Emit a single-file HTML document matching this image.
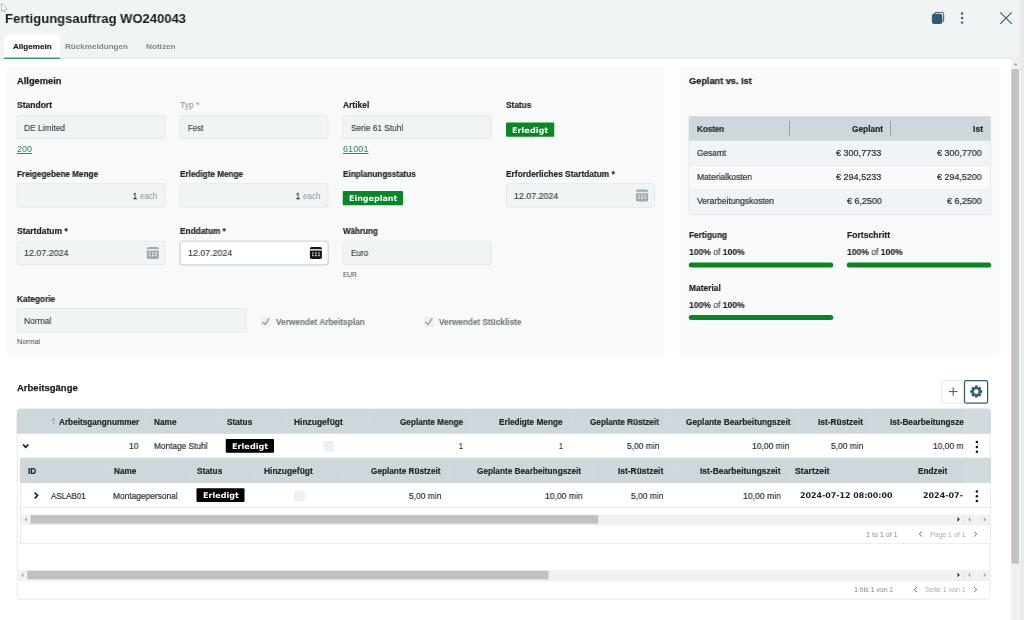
<!DOCTYPE html>
<html lang="de">
<head>
<meta charset="utf-8">
<title>Fertigungsauftrag WO240043</title>
<style>
html,body{margin:0;padding:0}
body{width:1024px;height:620px;position:relative;overflow:hidden;background:#fff;
 font-family:"Liberation Sans",sans-serif;font-size:9px;color:#2b2f33}
.a{position:absolute}
#shapes{position:absolute;left:0;top:0}
.t{position:absolute;white-space:nowrap;line-height:12px;height:12px;transform-origin:0 50%;will-change:transform}
.title{font-size:13.4px;font-weight:bold;color:#1a1d20}
.tab{font-weight:bold;font-size:8.1px;color:#1c1f22;-webkit-text-stroke:.2px #1c1f22}
.tabi{font-weight:bold;font-size:8.1px;color:#7f858a}
.sect{font-weight:bold;font-size:9.3px;color:#1c1f22;-webkit-text-stroke:.25px #1c1f22}
.lbl{font-weight:bold;font-size:8.4px;color:#24282c;-webkit-text-stroke:.2px #24282c}
.lbld{font-size:9px;color:#868d92}
.val{font-size:9px;color:#3a4045;-webkit-text-stroke:.15px #3a4045}
.vald{font-size:9px;color:#1f2326;-webkit-text-stroke:.3px #1f2326}
.unit{font-size:9px;color:#8b9398}
.sm{font-size:7.6px;color:#454b50}
.lnk{font-size:9px;color:#2d8a5e;text-decoration:underline;text-underline-offset:1px}
.bdg{font-family:"DejaVu Sans","Liberation Sans",sans-serif;color:#fff;font-weight:bold;font-size:7.8px}
.chk{font-weight:bold;font-size:8.4px;color:#7c8489;-webkit-text-stroke:.2px #7c8489}
.th{font-weight:bold;font-size:8.2px;color:#24282c;-webkit-text-stroke:.2px #24282c}
.td{font-size:9px;color:#2a2e32;-webkit-text-stroke:.2px #2a2e32}
.dt{font-family:"DejaVu Sans","Liberation Sans",sans-serif;font-weight:bold;font-size:7.9px;color:#1c1f22}
.pg{font-size:7.6px;color:#7e868b}
.pgl{font-size:7.6px;color:#a3aaae}
</style>
</head>
<body>
<svg id="shapes" width="1024" height="620" viewBox="0 0 1024 620">
<rect x="0" y="0" width="1020" height="58" fill="#f1f4f5"/>
<rect x="0" y="57.3" width="1020" height="1.7" fill="#e8ecee"/>
<rect x="1020" y="0" width="4" height="620" fill="#e9ecee"/>
<path d="M4.1 59V38.6Q4.1 34.8 7.9 34.8H56.4Q60.2 34.8 60.2 38.6V59Z" fill="#fff"/>
<rect x="4.1" y="57.4" width="56.1" height="1.7" rx="0.6" fill="#3a9b6d"/>
<g transform="translate(931.9 11.9)"><rect x="2.3" y=".5" width="9.5" height="9.5" rx="1.9" fill="none" stroke="#335b70" stroke-width="1"/><rect x="0" y="1.9" width="10.4" height="10.3" rx="2.1" fill="#335b70"/></g>
<circle cx="962.1" cy="13.5" r="1.2" fill="#335b70"/><circle cx="962.1" cy="18.05" r="1.2" fill="#335b70"/><circle cx="962.1" cy="22.6" r="1.2" fill="#335b70"/>
<path d="M1000.3 12.3L1011.7 23.9M1011.7 12.3L1000.3 23.9" fill="none" stroke="#335b70" stroke-width="1.15"/>
<path d="M1.4 3.3V11.5L3.3 9.9L4.4 12.2L5.6 11.6L4.6 9.5L7.3 9.3Z" fill="#fff" stroke="#a0a5a9" stroke-width="0.7"/>
<rect x="1011" y="59" width="9" height="561" fill="#f1f1f1"/>
<rect x="1011.4" y="69.2" width="7.5" height="494.4" fill="#c1c1c1"/>
<path d="M1013.4 65.3L1015.6 62.9L1017.8 65.3Z" fill="#a3a3a3"/>
<rect x="7" y="65.9" width="657.7" height="289.6" rx="3.5" fill="#f8fafa"/>
<rect x="17.0" y="115.25" width="148" height="23.5" rx="2.5" fill="#f1f4f5" stroke="#e4e9ec" stroke-width="1"/>
<rect x="180.0" y="115.25" width="148" height="23.5" rx="2.5" fill="#f1f4f5" stroke="#e4e9ec" stroke-width="1"/>
<rect x="343.0" y="115.25" width="148" height="23.5" rx="2.5" fill="#f1f4f5" stroke="#e4e9ec" stroke-width="1"/>
<rect x="506" y="122.5" width="48.25" height="14.2" rx="1" fill="#088726"/>
<rect x="17.0" y="183.75" width="148" height="23.5" rx="2.5" fill="#f1f4f5" stroke="#e4e9ec" stroke-width="1"/>
<rect x="180.0" y="183.75" width="148" height="23.5" rx="2.5" fill="#f1f4f5" stroke="#e4e9ec" stroke-width="1"/>
<rect x="506.5" y="183.75" width="148" height="23.5" rx="2.5" fill="#f1f4f5" stroke="#e4e9ec" stroke-width="1"/>
<rect x="342.75" y="191" width="60.25" height="14.2" rx="1" fill="#088726"/>
<rect x="17.0" y="241.25" width="148" height="23.5" rx="2.5" fill="#f1f4f5" stroke="#e4e9ec" stroke-width="1"/>
<rect x="180.0" y="241.1" width="148.2" height="23.900000000000002" rx="2.8" fill="#fff" stroke="#cfd9de" stroke-width="1.4"/>
<rect x="343.0" y="241.25" width="148" height="23.5" rx="2.5" fill="#f1f4f5" stroke="#e4e9ec" stroke-width="1"/>
<rect x="17.0" y="308.5" width="229.25" height="23.5" rx="2.5" fill="#f1f4f5" stroke="#e4e9ec" stroke-width="1"/>
<rect x="261.4" y="317.15" width="9.2" height="9.2" rx="1.3" fill="#edf1f3" stroke="#e6ebee" stroke-width="0.8"/>
<g transform="translate(261 316.75)"><path d="M1.3 5.3L4.2 7.6L8 1.9" fill="none" stroke="#9da2a6" stroke-width="1.45"/></g>
<rect x="424.4" y="317.15" width="9.2" height="9.2" rx="1.3" fill="#edf1f3" stroke="#e6ebee" stroke-width="0.8"/>
<g transform="translate(424 316.75)"><path d="M1.3 5.3L4.2 7.6L8 1.9" fill="none" stroke="#9da2a6" stroke-width="1.45"/></g>
<g transform="translate(636.1 189.6)"><rect x="0" y="0" width="12" height="12" rx="1.7" fill="#a2a8ac"/><rect x="0" y="2.1" width="12" height="1.7" fill="#e4e7e9"/><g fill="#fff" opacity=".5"><rect x="2.1" y="5.1" width="1.5" height="2.2"/><rect x="5.2" y="5.1" width="1.6" height="2.2"/><rect x="8.3" y="5.1" width="1.6" height="2.2"/></g><g fill="#fff" opacity=".85"><rect x="2.1" y="7.8" width="1.5" height="1.5"/><rect x="5.2" y="7.8" width="1.6" height="1.5"/><rect x="8.3" y="7.8" width="1.6" height="1.5"/></g></g>
<g transform="translate(146.8 246.9)"><rect x="0" y="0" width="12" height="12" rx="1.7" fill="#a2a8ac"/><rect x="0" y="2.1" width="12" height="1.7" fill="#e4e7e9"/><g fill="#fff" opacity=".5"><rect x="2.1" y="5.1" width="1.5" height="2.2"/><rect x="5.2" y="5.1" width="1.6" height="2.2"/><rect x="8.3" y="5.1" width="1.6" height="2.2"/></g><g fill="#fff" opacity=".85"><rect x="2.1" y="7.8" width="1.5" height="1.5"/><rect x="5.2" y="7.8" width="1.6" height="1.5"/><rect x="8.3" y="7.8" width="1.6" height="1.5"/></g></g>
<g transform="translate(309.9 246.9)"><rect x="0" y="0" width="12" height="12" rx="1.7" fill="#141719"/><rect x="0" y="2.1" width="12" height="1.7" fill="#c9c9c9"/><g fill="#fff" opacity=".5"><rect x="2.1" y="5.1" width="1.5" height="2.2"/><rect x="5.2" y="5.1" width="1.6" height="2.2"/><rect x="8.3" y="5.1" width="1.6" height="2.2"/></g><g fill="#fff" opacity=".85"><rect x="2.1" y="7.8" width="1.5" height="1.5"/><rect x="5.2" y="7.8" width="1.6" height="1.5"/><rect x="8.3" y="7.8" width="1.6" height="1.5"/></g></g>
<rect x="679.2" y="65.9" width="321.3" height="289.6" rx="3.5" fill="#f8fafa"/>
<rect x="688.75" y="116.25" width="302" height="98.75" rx="1" fill="#dfe5e8"/>
<path d="M688.75 140.75V118Q688.75 116.25 690.5 116.25H989Q990.7 116.25 990.7 118V140.75Z" fill="#ced7dc"/>
<rect x="689.45" y="140.75" width="300.5" height="24.3" fill="#f1f4f6"/>
<rect x="689.45" y="165.4" width="300.5" height="24.3" fill="#f9fbfb"/>
<rect x="689.45" y="189.8" width="300.6" height="24.5" fill="#f1f4f6"/>
<rect x="689.45" y="165" width="300.6" height="0.7" fill="#eaeef0"/>
<rect x="689.45" y="189.6" width="300.6" height="0.7" fill="#e8ecee"/>
<rect x="789" y="121.25" width="1" height="14.5" fill="#97a3a9"/>
<rect x="890" y="121.25" width="1" height="14.5" fill="#97a3a9"/>
<rect x="688.75" y="262.5" width="144.5" height="5" rx="2.5" fill="#0a8521"/>
<rect x="846.75" y="262.5" width="144.5" height="5" rx="2.5" fill="#0a8521"/>
<rect x="688.75" y="315" width="144.5" height="5" rx="2.5" fill="#0a8521"/>
<rect x="941.9" y="380.5" width="22.6" height="22.6" rx="1.8" fill="#fff" stroke="#e2e9ed" stroke-width="1"/>
<rect x="964.5" y="380.5" width="23.1" height="22.7" rx="1.8" fill="#fff" stroke="#335b70" stroke-width="1.25"/>
<path d="M953.2 387.3V395.9M948.9 391.6H957.5" fill="none" stroke="#335b70" stroke-width="1"/>
<path d="M975.06 387.27L975.13 385.87L977.47 385.87L977.54 387.27L978.48 387.66L979.53 386.72L981.18 388.37L980.24 389.42L980.63 390.36L982.03 390.43L982.03 392.77L980.63 392.84L980.24 393.78L981.18 394.83L979.53 396.48L978.48 395.54L977.54 395.93L977.47 397.33L975.13 397.33L975.06 395.93L974.12 395.54L973.07 396.48L971.42 394.83L972.36 393.78L971.97 392.84L970.57 392.77L970.57 390.43L971.97 390.36L972.36 389.42L971.42 388.37L973.07 386.72L974.12 387.66ZM978.85 391.60A2.55 2.55 0 1 0 973.75 391.60A2.55 2.55 0 1 0 978.85 391.60Z" fill="#335b70" stroke="#335b70" stroke-width="0.5" fill-rule="evenodd" stroke-linejoin="round"/>
<rect x="17.2" y="409.2" width="973" height="190" rx="3.5" fill="#fff" stroke="#e5eaed" stroke-width="0.9"/>
<path d="M16.75 433.8V412.3Q16.75 408.8 20.25 408.8H987.2Q990.7 408.8 990.7 412.3V433.8Z" fill="#ced7dc"/>
<path d="M963.75 433.8V408.8H987.2Q990.7 408.8 990.7 412.3V433.8Z" fill="#d2dadf"/>
<rect x="145.75" y="413.5" width="0.8" height="15.5" fill="#d4dce1"/>
<rect x="219.5" y="413.5" width="0.8" height="15.5" fill="#d4dce1"/>
<rect x="285.5" y="413.5" width="0.8" height="15.5" fill="#d4dce1"/>
<rect x="369.75" y="413.5" width="0.8" height="15.5" fill="#d4dce1"/>
<rect x="470.5" y="413.5" width="0.8" height="15.5" fill="#d4dce1"/>
<rect x="570.5" y="413.5" width="0.8" height="15.5" fill="#d4dce1"/>
<rect x="667" y="413.5" width="0.8" height="15.5" fill="#d4dce1"/>
<rect x="798.5" y="413.5" width="0.8" height="15.5" fill="#d4dce1"/>
<rect x="870.5" y="413.5" width="0.8" height="15.5" fill="#d4dce1"/>
<path d="M53.45 424.2V418.6M51.6 420.5L53.45 418.6L55.3 420.5" fill="none" stroke="#7f9aa8" stroke-width="0.75"/>
<path d="M23 444.4L25.7 447.3L28.4 444.4" fill="none" stroke="#111" stroke-width="1.5"/>
<rect x="225.75" y="439" width="48.25" height="13.7" rx="1" fill="#000"/>
<rect x="323.9" y="441.65" width="9.7" height="9.7" rx="1.3" fill="#edf1f3" stroke="#e6ebee" stroke-width="0.8"/>
<circle cx="976.9" cy="442.09999999999997" r="1.25" fill="#111"/><circle cx="976.9" cy="446.9" r="1.25" fill="#111"/><circle cx="976.9" cy="451.7" r="1.25" fill="#111"/>
<rect x="20.45" y="458" width="970" height="85.3" fill="#fff" stroke="#e5eaed" stroke-width="0.9"/>
<path d="M20 483V461Q20 458 23 458H987.7Q990.7 458 990.7 461V483Z" fill="#ced7dc"/>
<path d="M963.75 483V458H987.7Q990.7 458 990.7 461V483Z" fill="#d2dadf"/>
<rect x="108" y="462.5" width="0.8" height="15.5" fill="#d4dce1"/>
<rect x="191" y="462.5" width="0.8" height="15.5" fill="#d4dce1"/>
<rect x="255" y="462.5" width="0.8" height="15.5" fill="#d4dce1"/>
<rect x="343" y="462.5" width="0.8" height="15.5" fill="#d4dce1"/>
<rect x="448.5" y="462.5" width="0.8" height="15.5" fill="#d4dce1"/>
<rect x="592.5" y="462.5" width="0.8" height="15.5" fill="#d4dce1"/>
<rect x="675" y="462.5" width="0.8" height="15.5" fill="#d4dce1"/>
<rect x="791" y="462.5" width="0.8" height="15.5" fill="#d4dce1"/>
<rect x="912" y="462.5" width="0.8" height="15.5" fill="#d4dce1"/>
<path d="M34.6 492.6L37.6 495.5L34.6 498.4" fill="none" stroke="#111" stroke-width="1.5"/>
<rect x="196.5" y="488.25" width="48" height="13.7" rx="1" fill="#000"/>
<rect x="294.65" y="491.15" width="9.7" height="9.7" rx="1.3" fill="#edf1f3" stroke="#e6ebee" stroke-width="0.8"/>
<circle cx="976.9" cy="491.5" r="1.25" fill="#111"/><circle cx="976.9" cy="496.3" r="1.25" fill="#111"/><circle cx="976.9" cy="501.1" r="1.25" fill="#111"/>
<rect x="20.9" y="507.1" width="969.4" height="0.9" fill="#e6ebed"/>
<rect x="20.6" y="514.4" width="969.6999999999999" height="10" fill="#f1f1f1"/>
<rect x="30.6" y="515.15" width="567.65" height="8.5" fill="#c1c1c1"/>
<rect x="963.6" y="514.4" width="0.8" height="10" fill="#e0e4e6"/>
<path d="M26.900000000000002 517.1L24.6 519.4L26.900000000000002 521.6999999999999Z" fill="#a9a9a9"/>
<path d="M957.5 517.1L959.8000000000001 519.4L957.5 521.6999999999999Z" fill="#2b2b2b"/>
<path d="M970.3000000000001 517.1L968.0 519.4L970.3000000000001 521.6999999999999Z" fill="#a9a9a9"/>
<path d="M983.8 517.1L986.1 519.4L983.8 521.6999999999999Z" fill="#a9a9a9"/>
<rect x="20.9" y="524.4" width="969.4" height="0.8" fill="#e6ebed"/>
<path d="M921.8 531.7L919.3 534.1L921.8 536.5" fill="none" stroke="#5b6166" stroke-width="0.95"/>
<path d="M974.2 531.7L976.7 534.1L974.2 536.5" fill="none" stroke="#5b6166" stroke-width="0.95"/>
<rect x="17.2" y="570" width="973.0999999999999" height="10" fill="#f1f1f1"/>
<rect x="27.2" y="570.75" width="521.3" height="8.5" fill="#c1c1c1"/>
<rect x="963.6" y="570" width="0.8" height="10" fill="#e0e4e6"/>
<path d="M23.5 572.7L21.2 575L23.5 577.3Z" fill="#a9a9a9"/>
<path d="M957.5 572.7L959.8000000000001 575L957.5 577.3Z" fill="#2b2b2b"/>
<path d="M970.3000000000001 572.7L968.0 575L970.3000000000001 577.3Z" fill="#a9a9a9"/>
<path d="M983.8 572.7L986.1 575L983.8 577.3Z" fill="#a9a9a9"/>
<rect x="17.6" y="580" width="972.6" height="0.8" fill="#e6ebed"/>
<path d="M916.8 587.2L914.3 589.6L916.8 592.0" fill="none" stroke="#5b6166" stroke-width="0.95"/>
<path d="M974.2 587.2L976.7 589.6L974.2 592.0" fill="none" stroke="#5b6166" stroke-width="0.95"/>
</svg>
<div class="t title" id="t0" style="left:5.2px;top:12.6px;transform:scaleX(0.9730)">Fertigungsauftrag WO240043</div>
<div class="t tab" id="t1" style="left:12.9px;top:40.9px;transform:scaleX(1.0003)">Allgemein</div>
<div class="t tabi" id="t2" style="left:65px;top:40.9px;transform:scaleX(1.0005)">Rückmeldungen</div>
<div class="t tabi" id="t3" style="left:146px;top:40.9px;transform:scaleX(1.0091)">Notizen</div>
<div class="t sect" id="t4" style="left:16.75px;top:75.3px;transform:scaleX(1.0014)">Allgemein</div>
<div class="t lbl" id="t5" style="left:16.75px;top:99.4px;transform:scaleX(1.0163)">Standort</div>
<div class="t lbld" id="t6" style="left:180px;top:99.4px;transform:scaleX(0.9505)">Typ *</div>
<div class="t lbl" id="t7" style="left:342.75px;top:99.4px;transform:scaleX(1.0066)">Artikel</div>
<div class="t lbl" id="t8" style="left:506.25px;top:99.4px;transform:scaleX(0.9860)">Status</div>
<div class="t val" id="t9" style="left:24.25px;top:121.7px;transform:scaleX(0.9315)">DE Limited</div>
<div class="t val" id="t10" style="left:187.75px;top:121.7px;transform:scaleX(0.8707)">Fest</div>
<div class="t val" id="t11" style="left:350.5px;top:121.7px;transform:scaleX(0.9240)">Serie 61 Stuhl</div>
<div class="t bdg" id="t12" style="left:512px;top:124.8px;transform:scaleX(1.0446)">Erledigt</div>
<div class="t lnk" id="t13" style="left:16.8px;top:143px;transform:scaleX(0.9780)">200</div>
<div class="t lnk" id="t14" style="left:342.75px;top:143px;transform:scaleX(1.0187)">61001</div>
<div class="t lbl" id="t15" style="left:16.75px;top:168.2px;transform:scaleX(0.9722)">Freigegebene Menge</div>
<div class="t lbl" id="t16" style="left:180px;top:168.2px;transform:scaleX(0.9739)">Erledigte Menge</div>
<div class="t lbl" id="t17" style="left:342.75px;top:168.2px;transform:scaleX(0.9710)">Einplanungsstatus</div>
<div class="t lbl" id="t18" style="left:506.25px;top:168.2px;transform:scaleX(0.9986)">Erforderliches Startdatum *</div>
<div class="t vald" id="t19" style="left:132.5px;top:190.3px;transform:scaleX(0.7975)">1</div>
<div class="t unit" id="t20" style="left:139.75px;top:190.3px;transform:scaleX(0.8832)">each</div>
<div class="t vald" id="t21" style="left:295.5px;top:190.3px;transform:scaleX(0.7975)">1</div>
<div class="t unit" id="t22" style="left:303px;top:190.3px;transform:scaleX(0.8960)">each</div>
<div class="t bdg" id="t23" style="left:349px;top:193.4px;transform:scaleX(1.0218)">Eingeplant</div>
<div class="t val" id="t24" style="left:514px;top:190.3px;transform:scaleX(0.9823)">12.07.2024</div>
<div class="t lbl" id="t25" style="left:16.75px;top:225.4px;transform:scaleX(1.0191)">Startdatum *</div>
<div class="t lbl" id="t26" style="left:180px;top:225.4px;transform:scaleX(0.9832)">Enddatum *</div>
<div class="t lbl" id="t27" style="left:342.75px;top:225.4px;transform:scaleX(0.9574)">Währung</div>
<div class="t val" id="t28" style="left:24.25px;top:247.4px;transform:scaleX(0.9879)">12.07.2024</div>
<div class="t val" id="t29" style="left:187.75px;top:247.4px;transform:scaleX(0.9823)">12.07.2024</div>
<div class="t val" id="t30" style="left:350.5px;top:247.4px;transform:scaleX(0.9071)">Euro</div>
<div class="t sm" id="t31" style="left:342.75px;top:269px;transform:scaleX(0.8569)">EUR</div>
<div class="t lbl" id="t32" style="left:16.75px;top:292.6px;transform:scaleX(0.9834)">Kategorie</div>
<div class="t val" id="t33" style="left:24.25px;top:314.5px;transform:scaleX(0.9391)">Normal</div>
<div class="t sm" id="t34" style="left:16.75px;top:336px;transform:scaleX(0.9496)">Normal</div>
<div class="t chk" id="t35" style="left:276px;top:316px;transform:scaleX(0.9863)">Verwendet Arbeitsplan</div>
<div class="t chk" id="t36" style="left:439px;top:316px;transform:scaleX(0.9845)">Verwendet Stückliste</div>
<div class="t sect" id="t37" style="left:688.75px;top:75.3px;transform:scaleX(0.9872)">Geplant vs. Ist</div>
<div class="t th" id="t38" style="left:696.5px;top:123.6px;transform:scaleX(0.9730)">Kosten</div>
<div class="t th" id="t39" style="left:851.5px;top:123.6px;transform:scaleX(1.0169)">Geplant</div>
<div class="t th" id="t40" style="left:973px;top:123.6px;transform:scaleX(1.0458)">Ist</div>
<div class="t td" id="t41" style="left:696.5px;top:146.6px;transform:scaleX(0.9202)">Gesamt</div>
<div class="t td" id="t42" style="left:836px;top:146.6px;transform:scaleX(1.0045)">€ 300,7733</div>
<div class="t td" id="t43" style="left:936.75px;top:146.6px;transform:scaleX(0.9934)">€ 300,7700</div>
<div class="t td" id="t44" style="left:696.5px;top:171px;transform:scaleX(0.9397)">Materialkosten</div>
<div class="t td" id="t45" style="left:836px;top:171px;transform:scaleX(1.0045)">€ 294,5233</div>
<div class="t td" id="t46" style="left:936.75px;top:171px;transform:scaleX(0.9934)">€ 294,5200</div>
<div class="t td" id="t47" style="left:696.5px;top:195.3px;transform:scaleX(0.9383)">Verarbeitungskosten</div>
<div class="t td" id="t48" style="left:846.5px;top:195.3px;transform:scaleX(0.9915)">€ 6,2500</div>
<div class="t td" id="t49" style="left:946.75px;top:195.3px;transform:scaleX(0.9915)">€ 6,2500</div>
<div class="t lbl" id="t50" style="left:688.75px;top:229px;transform:scaleX(0.9838)">Fertigung</div>
<div class="t val" id="t51" style="left:688.75px;top:246.4px;transform:scaleX(0.9517)"><b style="color:#1c1f22">100%</b> of <b style="color:#1c1f22">100%</b></div>
<div class="t lbl" id="t52" style="left:846.75px;top:229px;transform:scaleX(1.0269)">Fortschritt</div>
<div class="t val" id="t53" style="left:846.75px;top:246.4px;transform:scaleX(0.9517)"><b style="color:#1c1f22">100%</b> of <b style="color:#1c1f22">100%</b></div>
<div class="t lbl" id="t54" style="left:688.75px;top:281.5px;transform:scaleX(1.0030)">Material</div>
<div class="t val" id="t55" style="left:688.75px;top:299px;transform:scaleX(0.9517)"><b style="color:#1c1f22">100%</b> of <b style="color:#1c1f22">100%</b></div>
<div class="t sect" id="t56" style="left:16.75px;top:382.4px;transform:scaleX(1.0224)">Arbeitsgänge</div>
<div class="t th" id="t57" style="left:58.5px;top:416.7px;transform:scaleX(1.0021)">Arbeitsgangnummer</div>
<div class="t th" id="t58" style="left:153.75px;top:416.7px;transform:scaleX(1.0084)">Name</div>
<div class="t th" id="t59" style="left:226.5px;top:416.7px;transform:scaleX(1.0087)">Status</div>
<div class="t th" id="t60" style="left:293.5px;top:416.7px;transform:scaleX(1.0307)">Hinzugefügt</div>
<div class="t th" id="t61" style="left:400px;top:416.7px;transform:scaleX(0.9960)">Geplante Menge</div>
<div class="t th" id="t62" style="left:499.25px;top:416.7px;transform:scaleX(1.0040)">Erledigte Menge</div>
<div class="t th" id="t63" style="left:590.25px;top:416.7px;transform:scaleX(0.9941)">Geplante Rüstzeit</div>
<div class="t th" id="t64" style="left:686.25px;top:416.7px;transform:scaleX(1.0118)">Geplante Bearbeitungszeit</div>
<div class="t th" id="t65" style="left:817.5px;top:416.7px;transform:scaleX(1.0198)">Ist-Rüstzeit</div>
<div class="a" style="left:889px;top:416.7px;width:74.89999999999998px;height:12px;overflow:hidden"><div class="t th" id="t66" style="left:0.8px;top:0;transform:scaleX(1.0089)">Ist-Bearbeitungszeit</div></div>
<div class="t td" id="t67" style="left:128.75px;top:440.3px;transform:scaleX(0.9485)">10</div>
<div class="t td" id="t68" style="left:153.75px;top:440.3px;transform:scaleX(0.9217)">Montage Stuhl</div>
<div class="t bdg" id="t69" style="left:231.75px;top:441.1px;transform:scaleX(1.0446)">Erledigt</div>
<div class="t td" id="t70" style="left:459px;top:440.3px;transform:scaleX(0.7975)">1</div>
<div class="t td" id="t71" style="left:558.75px;top:440.3px;transform:scaleX(0.7975)">1</div>
<div class="t td" id="t72" style="left:627.25px;top:440.3px;transform:scaleX(0.9412)">5,00 min</div>
<div class="t td" id="t73" style="left:751.75px;top:440.3px;transform:scaleX(0.9486)">10,00 min</div>
<div class="t td" id="t74" style="left:830.75px;top:440.3px;transform:scaleX(0.9412)">5,00 min</div>
<div class="a" style="left:930px;top:440.3px;width:33.60000000000002px;height:12px;overflow:hidden"><div class="t td" id="t75" style="left:2.6px;top:0;transform:scaleX(0.9410)">10,00 min</div></div>
<div class="t th" id="t76" style="left:27.5px;top:466.2px;transform:scaleX(1.0076)">ID</div>
<div class="t th" id="t77" style="left:113.75px;top:466.2px;transform:scaleX(0.9972)">Name</div>
<div class="t th" id="t78" style="left:197.25px;top:466.2px;transform:scaleX(1.0087)">Status</div>
<div class="t th" id="t79" style="left:264.25px;top:466.2px;transform:scaleX(1.0307)">Hinzugefügt</div>
<div class="t th" id="t80" style="left:371px;top:466.2px;transform:scaleX(1.0050)">Geplante Rüstzeit</div>
<div class="t th" id="t81" style="left:477.25px;top:466.2px;transform:scaleX(1.0070)">Geplante Bearbeitungszeit</div>
<div class="t th" id="t82" style="left:618px;top:466.2px;transform:scaleX(1.0255)">Ist-Rüstzeit</div>
<div class="t th" id="t83" style="left:699.5px;top:466.2px;transform:scaleX(1.0288)">Ist-Bearbeitungszeit</div>
<div class="t th" id="t84" style="left:794.75px;top:466.2px;transform:scaleX(1.0677)">Startzeit</div>
<div class="t th" id="t85" style="left:917.5px;top:466.2px;transform:scaleX(1.0043)">Endzeit</div>
<div class="t td" id="t86" style="left:50.75px;top:489.6px;transform:scaleX(0.8903)">ASLAB01</div>
<div class="t td" id="t87" style="left:113.25px;top:489.6px;transform:scaleX(0.9308)">Montagepersonal</div>
<div class="t bdg" id="t88" style="left:202.5px;top:490.4px;transform:scaleX(1.0302)">Erledigt</div>
<div class="t td" id="t89" style="left:408.5px;top:489.6px;transform:scaleX(0.9412)">5,00 min</div>
<div class="t td" id="t90" style="left:544.5px;top:489.6px;transform:scaleX(0.9549)">10,00 min</div>
<div class="t td" id="t91" style="left:631.25px;top:489.6px;transform:scaleX(0.9412)">5,00 min</div>
<div class="t td" id="t92" style="left:742.5px;top:489.6px;transform:scaleX(0.9613)">10,00 min</div>
<div class="t dt" id="t93" style="left:800px;top:490.3px;transform:scaleX(0.9948)">2024-07-12 08:00:00</div>
<div class="a" style="left:920px;top:490.3px;width:43.10000000000002px;height:12px;overflow:hidden"><div class="t dt" id="t94" style="left:2.9px;top:0;transform:scaleX(1.0127)">2024-07-12 12:00:00</div></div>
<div class="t pg" id="t95" style="left:866.25px;top:528.5px;transform:scaleX(0.9399)">1 to 1 of 1</div>
<div class="t pgl" id="t96" style="left:930px;top:528.5px;transform:scaleX(0.9136)">Page 1 of 1</div>
<div class="t pg" id="t97" style="left:853.75px;top:584px;transform:scaleX(0.9115)">1 bis 1 von 1</div>
<div class="t pgl" id="t98" style="left:925px;top:584px;transform:scaleX(0.9136)">Seite 1 von 1</div>
</body>
</html>
